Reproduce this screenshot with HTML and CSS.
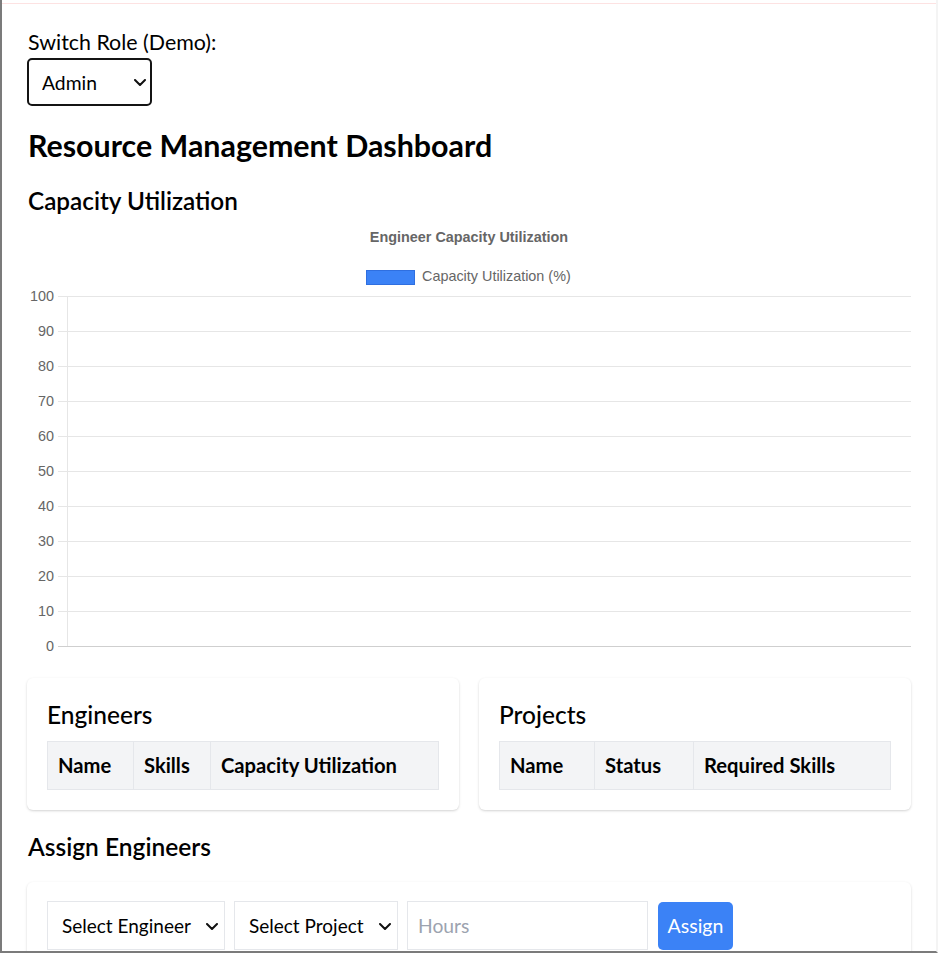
FILE: index.html
```html
<!DOCTYPE html>
<html lang="en">
<head>
<meta charset="utf-8">
<title>Resource Management Dashboard</title>
<link rel="stylesheet" href="styles.css">
</head>
<body>
<div class="frame">
  <div class="topline"></div>
  <main class="page">
    <label class="role-label" for="role">Switch Role (Demo):</label>
    <div class="select-wrap role-wrap">
      <select id="role" class="role-select">
        <option>Admin</option>
        <option>Manager</option>
        <option>Engineer</option>
      </select>
      <svg class="chev" width="12" height="7" viewBox="0 0 12 7"><path d="M1 1 L6 6 L11 1" fill="none" stroke="#111" stroke-width="2" stroke-linecap="round" stroke-linejoin="round"/></svg>
    </div>

    <h1 class="title">Resource Management Dashboard</h1>
    <h2 class="section chart-title">Capacity Utilization</h2>

    <svg class="chart" width="884" height="446" viewBox="0 0 884 446">
      <text class="c-title" x="442" y="26" text-anchor="middle">Engineer Capacity Utilization</text>
      <rect x="339.5" y="54.5" width="48" height="14" fill="#3b82f6" stroke="#2f6fe0" stroke-width="1"/>
      <text class="c-text" x="395" y="65">Capacity Utilization (%)</text>
      <g stroke="#e6e6e6" stroke-width="1">
        <line x1="31" y1="80.5" x2="884" y2="80.5"/>
        <line x1="31" y1="115.5" x2="884" y2="115.5"/>
        <line x1="31" y1="150.5" x2="884" y2="150.5"/>
        <line x1="31" y1="185.5" x2="884" y2="185.5"/>
        <line x1="31" y1="220.5" x2="884" y2="220.5"/>
        <line x1="31" y1="255.5" x2="884" y2="255.5"/>
        <line x1="31" y1="290.5" x2="884" y2="290.5"/>
        <line x1="31" y1="325.5" x2="884" y2="325.5"/>
        <line x1="31" y1="360.5" x2="884" y2="360.5"/>
        <line x1="31" y1="395.5" x2="884" y2="395.5"/>
        <line x1="40.5" y1="80" x2="40.5" y2="431"/>
      </g>
      <line x1="31" y1="430.5" x2="884" y2="430.5" stroke="#cfcfcf" stroke-width="1"/>
      <g class="c-text" text-anchor="end">
        <text x="27" y="85">100</text>
        <text x="27" y="120">90</text>
        <text x="27" y="155">80</text>
        <text x="27" y="190">70</text>
        <text x="27" y="225">60</text>
        <text x="27" y="260">50</text>
        <text x="27" y="295">40</text>
        <text x="27" y="330">30</text>
        <text x="27" y="365">20</text>
        <text x="27" y="400">10</text>
        <text x="27" y="435">0</text>
      </g>
    </svg>

    <div class="cards">
      <section class="card">
        <h3 class="card-title">Engineers</h3>
        <table class="tbl">
          <colgroup><col class="e1"><col class="e2"><col class="e3"></colgroup>
          <thead><tr><th>Name</th><th>Skills</th><th>Capacity Utilization</th></tr></thead>
          <tbody></tbody>
        </table>
      </section>
      <section class="card">
        <h3 class="card-title">Projects</h3>
        <table class="tbl">
          <colgroup><col class="p1"><col class="p2"><col class="p3"></colgroup>
          <thead><tr><th>Name</th><th>Status</th><th>Required Skills</th></tr></thead>
          <tbody></tbody>
        </table>
      </section>
    </div>

    <h2 class="section assign-title">Assign Engineers</h2>
    <section class="card assign-card">
      <div class="assign-row">
        <div class="select-wrap eng-wrap">
          <select class="field-select">
            <option>Select Engineer</option>
          </select>
          <svg class="chev" width="12" height="7" viewBox="0 0 12 7"><path d="M1 1 L6 6 L11 1" fill="none" stroke="#111" stroke-width="2" stroke-linecap="round" stroke-linejoin="round"/></svg>
        </div>
        <div class="select-wrap proj-wrap">
          <select class="field-select">
            <option>Select Project</option>
          </select>
          <svg class="chev" width="12" height="7" viewBox="0 0 12 7"><path d="M1 1 L6 6 L11 1" fill="none" stroke="#111" stroke-width="2" stroke-linecap="round" stroke-linejoin="round"/></svg>
        </div>
        <input class="hours" type="number" placeholder="Hours">
        <button class="assign-btn" type="button">Assign</button>
      </div>
    </section>
  </main>
</div>
</body>
</html>
```
FILE: styles.css
```css
html, body {
  margin: 0;
  padding: 0;
  background: #ffffff;
}
body {
  font-family: Lato, "Noto Sans", sans-serif;
  color: #000;
}
.frame {
  height: 953px;
  box-sizing: border-box;
  border-left: 2px solid #7b7b7b;
  border-bottom: 2px solid #7b7b7b;
  border-right: 2px solid #f4f4f4;
  overflow: hidden;
}
.topline {
  margin-top: 3px;
  height: 1px;
  background: #fde2e2;
}
.page {
  padding: 0 25px 0 25px;
}
.role-label {
  display: block;
  margin-top: 23px;
  font-size: 21.4px;
  line-height: 30px;
  padding-left: 1px;
}
.select-wrap {
  position: relative;
  display: inline-block;
}
.chev {
  position: absolute;
  top: 50%;
  margin-top: -3px;
  pointer-events: none;
}
.role-wrap {
  display: block;
  width: 125px;
  margin-top: 1px;
}
.role-wrap .chev { right: 6px; }
.role-select {
  appearance: none;
  -webkit-appearance: none;
  width: 125px;
  height: 48px;
  box-sizing: border-box;
  border: 2px solid #141414;
  border-radius: 5px;
  background: #fff;
  padding: 0 0 0 13px;
  font-family: inherit;
  font-size: 19.3px;
  color: #000;
  outline: none;
}
.title {
  margin: 19px 0 0 1px;
  font-size: 30.4px;
  line-height: 40px;
  font-weight: 700;
}
.section {
  margin: 20px 0 0 1px;
  font-size: 24.3px;
  line-height: 32px;
  font-weight: 600;
}
.chart-title {
  line-height: 31px;
}
.chart {
  display: block;
}
.c-title {
  font-family: "Liberation Sans", Arial, sans-serif;
  font-size: 14.4px;
  font-weight: 700;
  fill: #666;
}
.c-text {
  font-family: "Liberation Sans", Arial, sans-serif;
  font-size: 14.4px;
  fill: #666;
}
.cards {
  margin-top: 16px;
  display: grid;
  grid-template-columns: 1fr 1fr;
  gap: 20px;
}
.card {
  background: #fff;
  border-radius: 6px;
  box-shadow: 0 1px 3px rgba(0, 0, 0, 0.12), 0 1px 2px rgba(0, 0, 0, 0.06);
  padding: 20px;
}
.card-title {
  margin: 0 0 12px 0;
  padding-top: 3px;
  font-size: 24.5px;
  line-height: 28px;
  font-weight: 500;
}
.tbl {
  width: 100%;
  border-collapse: collapse;
  table-layout: fixed;
}
.tbl th {
  background: #f3f4f6;
  border: 1px solid #e5e7eb;
  padding: 10px 10px;
  text-align: left;
  font-size: 20.2px;
  line-height: 27px;
  font-weight: 700;
  white-space: nowrap;
}
.e1 { width: 86px; }
.e2 { width: 77px; }
.e3 { width: auto; }
.p1 { width: 95px; }
.p2 { width: 99px; }
.p3 { width: auto; }
.assign-title {
  margin-top: 22px;
  font-size: 24.5px;
  line-height: 30px;
}
.assign-card {
  margin-top: 20px;
  padding: 19px 20px;
}
.assign-row {
  display: flex;
  align-items: center;
  gap: 9px;
}
.field-select {
  appearance: none;
  -webkit-appearance: none;
  height: 49px;
  box-sizing: border-box;
  border: 1px solid #e5e7eb;
  border-radius: 0;
  background: #fff;
  padding: 0 0 0 14px;
  font-family: inherit;
  font-size: 19px;
  color: #000;
  outline: none;
}
.eng-wrap .field-select { width: 178px; }
.proj-wrap .field-select { width: 164px; }
.eng-wrap .chev, .proj-wrap .chev { right: 7px; }
.hours {
  width: 241px;
  height: 49px;
  box-sizing: border-box;
  border: 1px solid #e5e7eb;
  padding: 0 10px;
  font-family: inherit;
  font-size: 19.3px;
  outline: none;
  -moz-appearance: textfield;
}
.hours::-webkit-inner-spin-button,
.hours::-webkit-outer-spin-button {
  -webkit-appearance: none;
  margin: 0;
}
.hours::placeholder { color: #9ca3af; }
.assign-btn {
  margin-left: 1px;
  width: 75px;
  height: 48px;
  border: none;
  border-radius: 5px;
  background: #3b82f6;
  color: #fff;
  font-family: inherit;
  font-size: 19.5px;
  padding: 0;
}
```
